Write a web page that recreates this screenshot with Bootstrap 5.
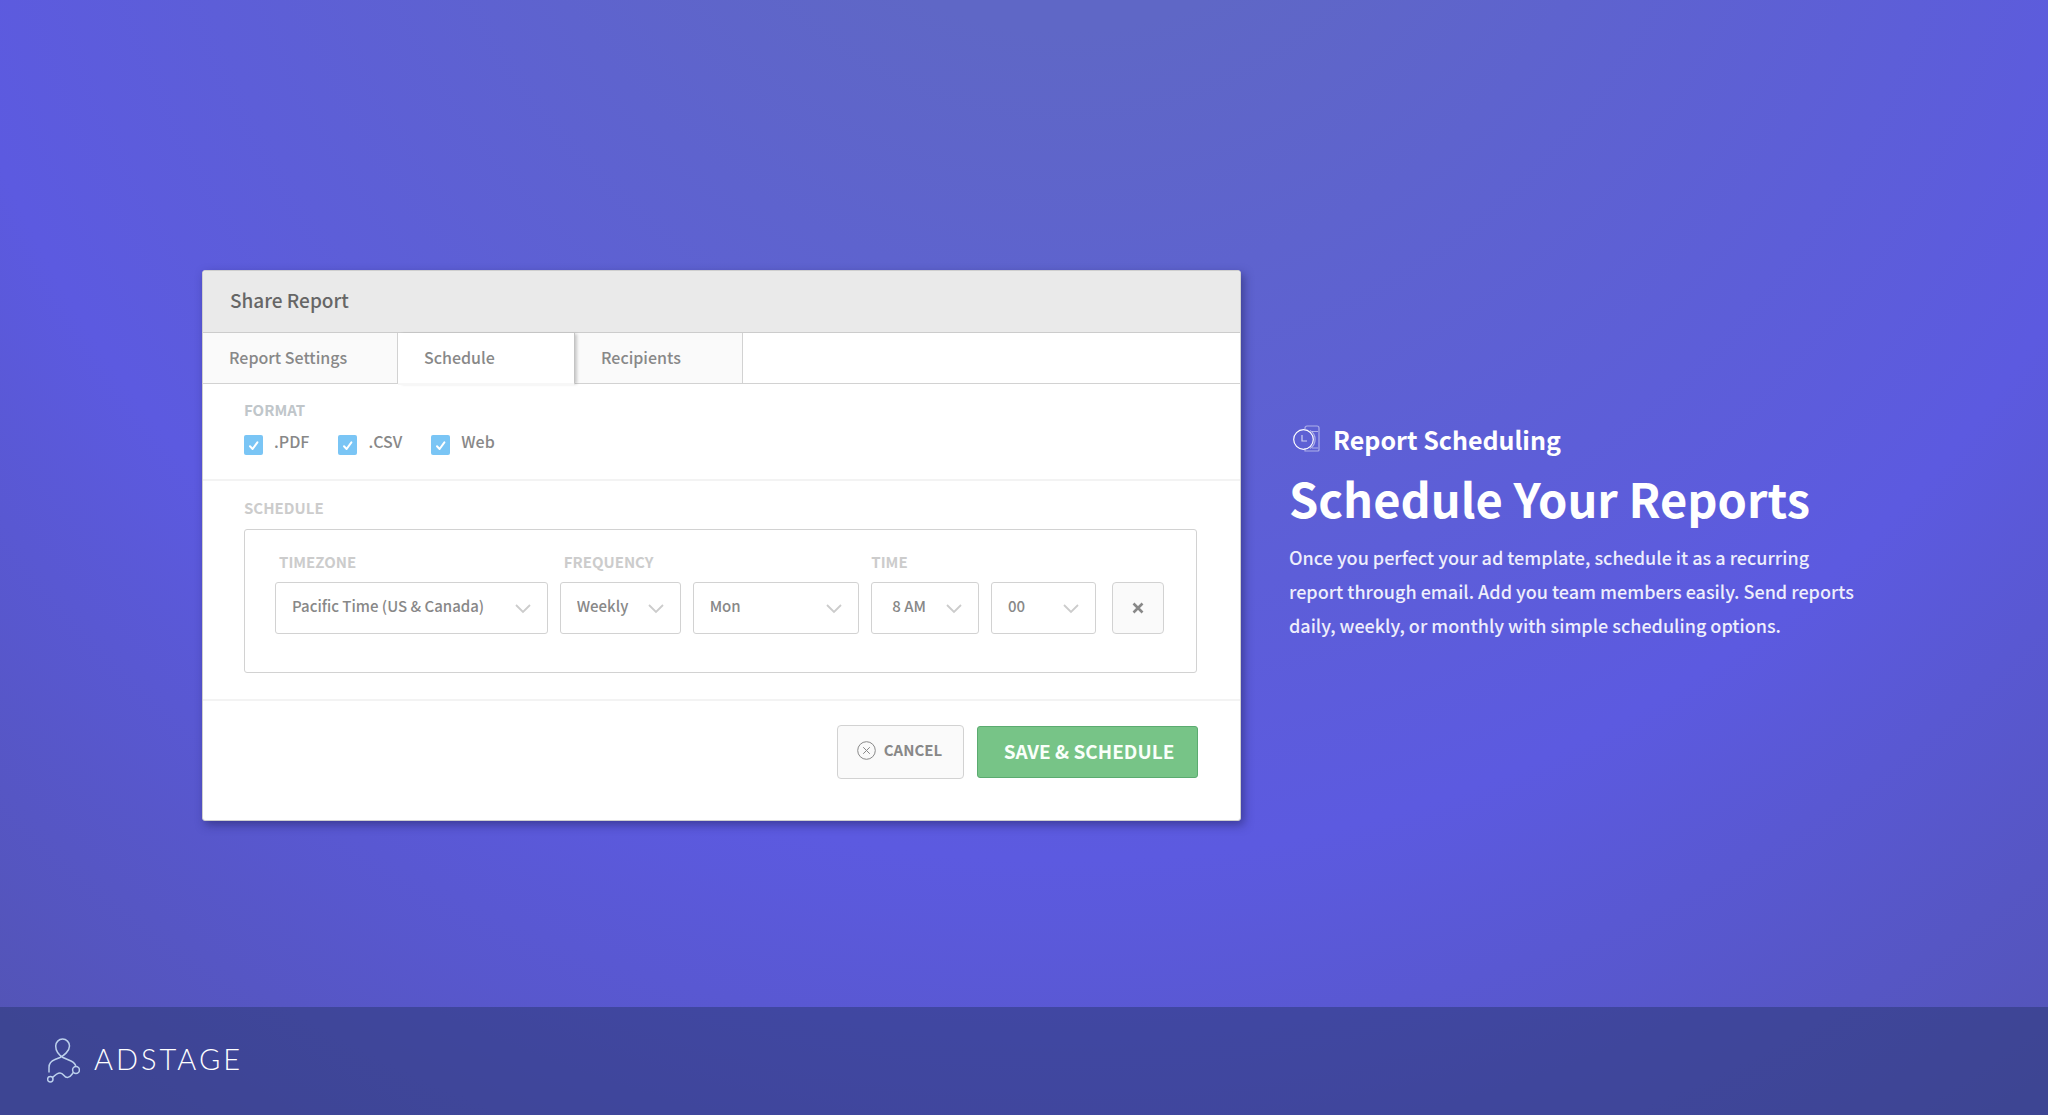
<!DOCTYPE html>
<html lang="en">
<head>
<meta charset="utf-8">
<meta name="viewport" content="width=device-width, initial-scale=1">
<title>AdStage – Report Scheduling</title>
<link href="https://cdn.jsdelivr.net/npm/bootstrap@5.3.0/dist/css/bootstrap.min.css" rel="stylesheet">
<style>
  body {
    font-family: "Noto Sans CJK SC", "Noto Sans", sans-serif;
    font-size: 15px;
    font-weight: 500;
    color: #888;
    background: radial-gradient(circle at 52% -300px, #5f67c6 0, #5f67c6 330px, #5c5ae0 1160px, #5354b6 1700px) #5c5ae0;
  }
  .stage { padding: 84px 182px 0 202px; gap: 48px; }
  .share-card {
    flex: 0 1 1039px;
    border: 1px solid #cfcfcf;
    border-radius: 3px;
    box-shadow: 3px 4px 10px rgba(30, 30, 90, .5);
  }
  .share-card .card-header {
    height: 62px;
    padding: 0 27px 2px;
    background: #eaeaea;
    border-bottom: 1px solid #ccc;
    border-radius: 2px 2px 0 0;
  }
  .share-card h1 { font-size: 19px; font-weight: 500; color: #666; }
  .share-tabs { height: 51px; border-bottom: 1px solid #d2d2d2; }
  .share-tabs .nav-link {
    height: 50px;
    padding: 0 26px 2px;
    font-size: 16px;
    font-weight: 500;
    line-height: 46px;
    color: #888;
    background: #fafafa;
    border: 0;
    border-right: 1px solid #d2d2d2;
    border-radius: 0;
    text-align: left;
  }
  .share-tabs .nav-link.active {
    position: relative;
    height: 52px;
    background: #fff;
    color: #888;
    border-right-color: #c4c4c4;
    border-bottom: 2px solid #f7f7f7;
    box-shadow: 3px 0 3px -1px rgba(0, 0, 0, .2);
  }
  .tab-settings { width: 195px; }
  .tab-schedule { width: 177px; }
  .tab-recipients { width: 168px; }
  .pane { border-bottom: 2px solid #f3f3f3; padding: 0 43px 0 41px; }
  .pane-format { height: 97px; padding-top: 15px; }
  .pane-schedule { height: 220px; padding-top: 16px; }
  .caption {
    display: block;
    margin: 0;
    font-size: 15px;
    font-weight: 700;
    line-height: 22px;
    color: #ccc;
  }
  .caption-cool { color: #c0c6ca; }
  .formats { gap: 29px; margin-top: 8px; }
  .formats .form-check { min-height: 0; margin: 0; padding: 0; gap: 11px; }
  .formats .form-check-input {
    float: none;
    width: 19px;
    height: 20px;
    margin: 6px 0 0;
    border: 0;
    border-radius: 2px;
  }
  .formats .form-check-input:checked {
    background-color: #7ac5f5;
    background-image: url("data:image/svg+xml,%3Csvg xmlns='http://www.w3.org/2000/svg' viewBox='0 0 19 19' fill='none' stroke='%23fff' stroke-width='2' stroke-linecap='round' stroke-linejoin='round'%3E%3Cpath d='M6 10.3 8.600 13 13.400 6.400'/%3E%3C/svg%3E");
  }
  .formats label { font-size: 16px; line-height: 24px; }
  .rule-box {
    height: 144px;
    margin-top: 10px;
    padding: 21px 32px 0 30px;
    border: 1px solid #d2d2d2;
    border-radius: 3px;
    gap: 12px;
  }
  .rule-box .caption { padding-left: 4px; margin-bottom: 9px; }
  .select-pair { gap: 12px; }
  .rule-box .form-select {
    --bs-form-select-bg-img: url("data:image/svg+xml,%3Csvg xmlns='http://www.w3.org/2000/svg' viewBox='0 0 16 16' fill='none' stroke='%23ccc' stroke-width='1.800'%3E%3Cpath d='M1 5l7 7 7-7'/%3E%3C/svg%3E");
    height: 52px;
    padding: 0 34px 3px 16px;
    font-size: 15px;
    font-weight: 500;
    color: #888;
    border-color: #d2d2d2;
    border-radius: 3px;
    background-position: right 16px center;
    background-size: 16px 16px;
  }
  .w-zone { flex: 0 1 273px; }
  .w-freq { flex: 0 1 300px; }
  .w-time { flex: 0 1 225px; }
  .w-week { width: 121px; }
  .rule-box .select-hour { padding-left: 20px; }
  .btn-soft {
    color: #888;
    background: #fafafa;
    border: 1px solid #d2d2d2;
    border-radius: 4px;
  }
  .btn-remove { width: 52px; height: 52px; margin-left: 4px; }
  .actions { gap: 13px; padding: 24px 42px 41px; }
  .btn-cancel { width: 127px; height: 54px; padding: 0 2px 3px 0; gap: 8px; font-size: 15px; font-weight: 700; }
  .btn-save {
    width: 221px;
    height: 52px;
    padding: 0 0 2px 3px;
    font-size: 19px;
    font-weight: 700;
    color: #fafffa;
    background: #77c487;
    border: 1px solid #5bab70;
    border-radius: 3px;
  }
  .pitch { flex: 0 1 576px; margin-bottom: 28px; color: #fff; }
  .pitch .kicker { font-size: 25px; font-weight: 700; line-height: 34px; gap: 13px; margin-left: 4px; }
  .pitch h2 { font-size: 47px; font-weight: 700; line-height: 60px; margin: 12px 0; }
  .pitch p { font-size: 18px; line-height: 34px; color: #eeeefc; margin: 0; }
  .brand-bar { height: 108px; padding: 0 47px 2px; background: rgba(40, 54, 112, .5); }
  .brand-link { gap: 14px; }
  .brand-name { font-family: Lato, sans-serif; font-weight: 300; font-size: 29px; line-height: 40px; letter-spacing: 3px; color: #fff; padding-bottom: 2px; }
</style>
<script src="https://cdn.jsdelivr.net/npm/bootstrap@5.3.0/dist/js/bootstrap.bundle.min.js"></script>
</head>
<body class="d-flex flex-column min-vh-100">
  <main class="stage d-flex flex-grow-1 align-items-center">
    <form class="share-card card">
      <div class="card-header d-flex align-items-center">
        <h1 class="m-0">Share Report</h1>
      </div>
      <div class="share-tabs nav" role="tablist">
        <button type="button" class="nav-link tab-settings" role="tab">Report Settings</button>
        <button type="button" class="nav-link tab-schedule active" role="tab" aria-selected="true">Schedule</button>
        <button type="button" class="nav-link tab-recipients" role="tab">Recipients</button>
      </div>
      <section class="pane pane-format">
        <span class="caption caption-cool">FORMAT</span>
        <div class="formats d-flex">
          <div class="form-check d-flex"><input class="form-check-input" type="checkbox" id="pdf" checked><label for="pdf">.PDF</label></div>
          <div class="form-check d-flex"><input class="form-check-input" type="checkbox" id="csv" checked><label for="csv">.CSV</label></div>
          <div class="form-check d-flex"><input class="form-check-input" type="checkbox" id="web" checked><label for="web">Web</label></div>
        </div>
      </section>
      <section class="pane pane-schedule">
        <span class="caption">SCHEDULE</span>
        <div class="rule-box d-flex">
          <div class="w-zone">
            <label class="caption" for="zone">TIMEZONE</label>
            <select class="form-select" id="zone"><option>Pacific Time (US &amp; Canada)</option></select>
          </div>
          <div class="w-freq">
            <label class="caption" for="freq">FREQUENCY</label>
            <div class="select-pair d-flex">
              <select class="form-select w-week flex-shrink-0" id="freq"><option>Weekly</option></select>
              <select class="form-select" aria-label="Day"><option>Mon</option></select>
            </div>
          </div>
          <div class="w-time">
            <label class="caption ps-0" for="hour">TIME</label>
            <div class="select-pair d-flex">
              <select class="form-select select-hour" id="hour"><option>8 AM</option></select>
              <select class="form-select" aria-label="Minute"><option>00</option></select>
            </div>
          </div>
          <div>
            <span class="caption">&nbsp;</span>
            <button type="button" class="btn btn-soft btn-remove d-flex align-items-center justify-content-center p-0" aria-label="Remove">
              <svg width="12" height="12" viewBox="0 0 12 12" fill="none" stroke="#888" stroke-width="2.6"><path d="M1.500 1.500l9 9M10.500 1.500l-9 9"/></svg>
            </button>
          </div>
        </div>
      </section>
      <div class="actions d-flex justify-content-end align-items-center">
        <button type="button" class="btn btn-soft btn-cancel d-flex align-items-center justify-content-center">
          <svg width="19" height="19" viewBox="0 0 19 19" fill="none" stroke="#888"><circle cx="9.500" cy="9.500" r="8.800"/><path d="M6.200 6.200l6.600 6.600M12.800 6.200l-6.600 6.600"/></svg>
          CANCEL
        </button>
        <button type="submit" class="btn btn-save">SAVE &amp; SCHEDULE</button>
      </div>
    </form>
    <section class="pitch">
      <div class="kicker d-flex align-items-center">
        <svg width="27" height="28" viewBox="0 0 27 28" fill="none" stroke="#fff" stroke-width="1.2">
          <g stroke-opacity=".5"><path d="M12 4V3a2 2 0 0 1 2-2h10a2 2 0 0 1 2 2v22a1 1 0 0 1-1 1H12v-3M19 6.500h6M19 23h6"/><path d="M17 5.500a10.500 10.500 0 0 1 0 18"/></g>
          <circle cx="10.500" cy="14.500" r="9.800"/><path d="M9 10v6h5" stroke-opacity=".7"/>
        </svg>
        Report Scheduling
      </div>
      <h2>Schedule Your Reports</h2>
      <p>Once you perfect your ad template, schedule it as a recurring report through email. Add you team members easily. Send reports daily, weekly, or monthly with simple scheduling options.</p>
    </section>
  </main>
  <footer class="brand-bar d-flex align-items-center">
    <a href="#" class="brand-link d-flex align-items-center text-decoration-none">
      <svg width="33" height="45" viewBox="0 0 33 45" fill="none" stroke="#bcd0ec" stroke-width="1.500">
        <path d="M2 34.500V29.500C2 25 4 23 8 21.500L13 19.500C17 17.500 22.500 13 22.500 8A6.900 6.900 0 0 0 8.700 8C8.700 13 12 17 16 19.500L24 23C27 24.500 28.500 26 28.800 28.500"/>
        <circle cx="29" cy="32" r="3.400"/><circle cx="3.300" cy="41.200" r="2.700"/>
        <path d="M5.500 39.500C8 37 10 35 13 35C17 35 16.500 39.500 20.500 39.500C23.500 39.500 24.500 36.500 26.500 34.300"/>
      </svg>
      <span class="brand-name">ADSTAGE</span>
    </a>
  </footer>
</body>
</html>
